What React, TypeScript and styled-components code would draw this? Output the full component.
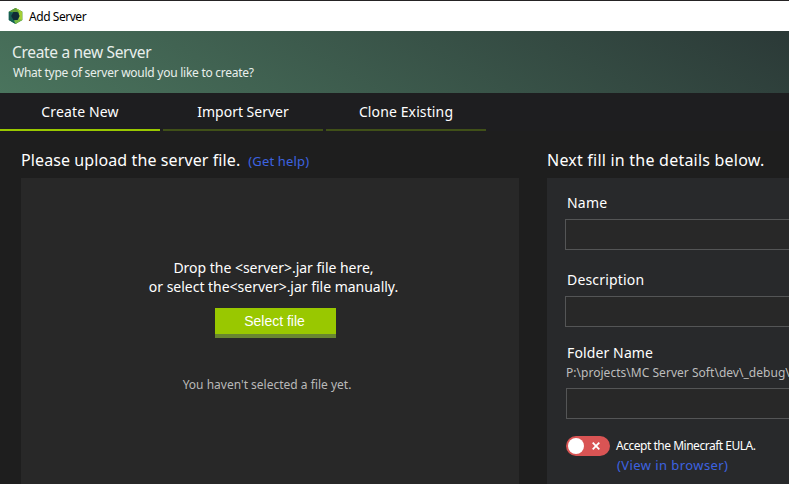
import React from 'react';
import styled, { createGlobalStyle } from 'styled-components';

const GlobalStyle = createGlobalStyle`
  * { box-sizing: border-box; }
  html, body { margin: 0; background: #1e1e1e; overflow: hidden; }
  body { font-family: "Noto Sans", "Open Sans", sans-serif; font-size: 14px; color: #fff; }
`;

const Window = styled.div`
  display: flex;
  flex-direction: column;
  width: 100%;
  height: 100vh;
  overflow: hidden;
  white-space: nowrap;
  border-top: 1px solid #252324;
`;

const TitleBar = styled.header`
  display: flex;
  align-items: center;
  flex: none;
  gap: 6px;
  height: 30px;
  padding-left: 8px;
  background: #fff;
  color: #000;
  font-size: 12px;
  letter-spacing: -0.45px;
`;

const Banner = styled.section`
  flex: none;
  height: 62px;
  padding: 11px 12px 0;
  background: linear-gradient(30deg, #4a745d 0%, #2b3937 100%);
  color: #e9efec;
`;

const BannerTitle = styled.h1`
  margin: 0;
  font-size: 15.5px;
  font-weight: 400;
  line-height: 21px;
  letter-spacing: -0.32px;
`;

const BannerSubtitle = styled.p`
  margin: 0;
  padding-left: 1px;
  font-size: 12px;
  line-height: 20px;
  letter-spacing: -0.26px;
`;

const Tabs = styled.nav`
  display: flex;
  flex: none;
  gap: 3px;
  height: 38px;
  background: #1e1e20;
`;

const Tab = styled.button<{ $active?: boolean; $spacing: number }>`
  width: 160px;
  height: 38px;
  padding: 2px 0 0;
  border: 0;
  border-bottom: 2px solid ${p => (p.$active ? '#99c800' : '#405018')};
  background: none;
  color: #fff;
  font: 14px/34px "Noto Sans", sans-serif;
  letter-spacing: ${p => p.$spacing}px;
`;

const Content = styled.main`
  display: grid;
  grid-template-columns: 498px 270px;
  column-gap: 28px;
  flex: 1;
  min-height: 0;
  padding-left: 21px;
`;

const Column = styled.section`
  display: flex;
  flex-direction: column;
  padding-top: 17px;
`;

const Heading = styled.h2<{ $spacing: number }>`
  display: flex;
  align-items: baseline;
  gap: 8px;
  height: 30px;
  margin: 0;
  font-size: 16px;
  font-weight: 400;
  line-height: 24px;
  letter-spacing: ${p => p.$spacing}px;
`;

const Link = styled.a<{ $spacing: number }>`
  color: #3d63e0;
  font-size: 13px;
  letter-spacing: ${p => p.$spacing}px;
`;

const DropZone = styled.div`
  display: flex;
  flex-direction: column;
  align-items: center;
  flex: 1;
  padding-top: 80px;
  background: #282828;
`;

const DropLine = styled.div`
  padding-left: 7px;
  line-height: 19px;
  letter-spacing: -0.02px;
`;

const SelectButton = styled.button`
  width: 121px;
  height: 30px;
  margin: 12px 0 37px 11px;
  padding: 0 2px 0 0;
  border: 0;
  border-bottom: 4px solid #688630;
  background: #99c800;
  color: #fff;
  font: 14px/26px "Liberation Sans", Arial, sans-serif;
`;

const FileStatus = styled.div`
  padding-right: 6px;
  color: #b9b9b9;
  font-size: 12px;
  line-height: 20px;
`;

const Form = styled.form`
  display: flex;
  flex-direction: column;
  flex: 1;
  padding: 15px 0 0 18px;
  background: #28292b;
`;

const Label = styled.label<{ $spacing: number; $height: number }>`
  height: ${p => p.$height}px;
  padding-left: 2px;
  line-height: 20px;
  letter-spacing: ${p => p.$spacing}px;
`;

const Path = styled.div`
  height: 23px;
  padding-left: 1px;
  color: #bdbdbd;
  font-size: 12px;
  line-height: 16px;
  letter-spacing: 0.03px;
`;

const Input = styled.input<{ $gap: number; $indent?: boolean }>`
  flex: none;
  height: 31px;
  margin: 0 0 ${p => p.$gap}px ${p => (p.$indent ? 1 : 0)}px;
  padding: 0 8px;
  border: 1px solid #545556;
  border-radius: 0;
  background: #282828;
  color: #fff;
`;

const EulaRow = styled.div`
  display: flex;
  gap: 6px;
  padding-left: 1px;
`;

const Switch = styled.div`
  display: flex;
  align-items: center;
  width: 44px;
  height: 20px;
  padding: 0 10px 0 2px;
  justify-content: space-between;
  border-radius: 10px;
  background: #d95454;
`;

const Knob = styled.span`
  width: 16px;
  height: 16px;
  border-radius: 50%;
  background: #fff;
`;

const EulaText = styled.div`
  display: flex;
  flex-direction: column;
  font-size: 12px;
  line-height: 19px;
  letter-spacing: -0.48px;
`;

const EulaLink = styled(Link)`
  padding-left: 1px;
  line-height: 20px;
`;

const Logo = () => (
  <svg width="15" height="16" viewBox="0 0 15 16">
    <path d="M7.5 0 14.3 3.8v8.2L7.5 16 .8 12V3.8Z" fill="#126a58" />
    <path d="M7.5 0 14.3 3.8 10.5 5 .8 3.8Z" fill="#5f9d35" />
    <path d="M7.5 0 14.3 3.8V12L10 13.7 11 4Z" fill="#a4cf35" />
    <path d="M7.5 16 14.3 12 11 11 6 12.5Z" fill="#78b843" />
    <path d="M.8 3.8 4 6v6l3.5 4L.8 12Z" fill="#175e51" />
    <path d="M5.3 4h4.2L11.7 8l-2.2 4H5.3L3.2 8Z" fill="#102c36" />
  </svg>
);

const Cross = () => (
  <svg width="8" height="8" viewBox="0 0 8 8">
    <path d="M.7.7 7.3 7.3M7.3.7.7 7.3" stroke="#fff" strokeWidth="1.8" />
  </svg>
);

export default function App() {
  return (
    <Window>
      <GlobalStyle />
      <TitleBar><Logo />Add Server</TitleBar>
      <Banner>
        <BannerTitle>Create a new Server</BannerTitle>
        <BannerSubtitle>What type of server would you like to create?</BannerSubtitle>
      </Banner>
      <Tabs>
        <Tab $active $spacing={0.14}>Create New</Tab>
        <Tab $spacing={0}>Import Server</Tab>
        <Tab $spacing={0.12}>Clone Existing</Tab>
      </Tabs>
      <Content>
        <Column>
          <Heading $spacing={0.1}>
            Please upload the server file.
            <Link $spacing={0.15}>(Get help)</Link>
          </Heading>
          <DropZone>
            <DropLine>Drop the &lt;server&gt;.jar file here,</DropLine>
            <DropLine>or select the&lt;server&gt;.jar file manually.</DropLine>
            <SelectButton>Select file</SelectButton>
            <FileStatus>You haven't selected a file yet.</FileStatus>
          </DropZone>
        </Column>
        <Column>
          <Heading $spacing={0.22}>Next fill in the details below.</Heading>
          <Form>
            <Label $spacing={0.2} $height={26}>Name</Label>
            <Input $gap={20} />
            <Label $spacing={0.18} $height={26}>Description</Label>
            <Input $gap={16} />
            <Label $spacing={0.12} $height={22}>Folder Name</Label>
            <Path>{'P:\\projects\\MC Server Soft\\dev\\_debug\\'}</Path>
            <Input $gap={17} $indent />
            <EulaRow>
              <Switch><Knob /><Cross /></Switch>
              <EulaText>
                Accept the Minecraft EULA.
                <EulaLink $spacing={0.42}>(View in browser)</EulaLink>
              </EulaText>
            </EulaRow>
          </Form>
        </Column>
      </Content>
    </Window>
  );
}
